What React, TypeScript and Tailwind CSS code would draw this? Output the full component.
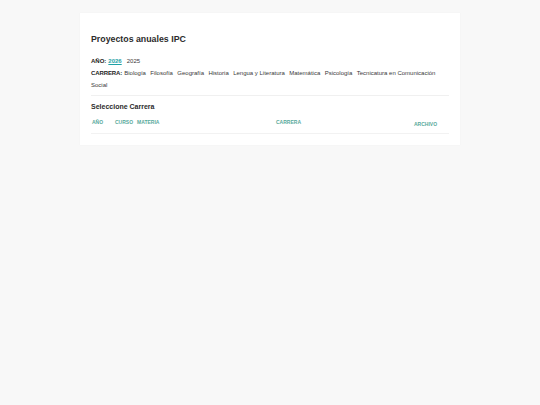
const carreras = [
  "Biología",
  "Filosofía",
  "Geografía",
  "Historia",
  "Lengua y Literatura",
  "Matemática",
  "Psicología",
  "Tecnicatura en Comunicación Social",
];

export default function App() {
  return (
    <div
      className="min-h-[405px] bg-[#f8f8f8] pt-[13px] text-[#333]"
      style={{ fontFamily: '"Liberation Sans", Arial, sans-serif' }}
    >
      <div className="mx-auto w-[380px] bg-white px-[11px] pt-[20px] pb-[11px] shadow-[0_0_1px_rgba(0,0,0,0.06)]">
        <h1 className="text-[8.8px] font-bold leading-[12px] text-[#2b2b2b]">Proyectos anuales IPC</h1>

        <div className="mt-[10px] text-[6px] leading-[12px] text-[#3a3a3a]">
          <span className="font-bold text-[#222]">AÑO:</span>
          <a className="ml-[2px] font-bold text-[#1fa2a6] underline">2026</a>
          <a className="ml-[5px]">2025</a>
        </div>

        <div className="text-[6px] leading-[12px] text-[#3a3a3a]">
          <span className="mr-[2px] font-bold tracking-[-0.1px] text-[#222]">CARRERA:</span>
          {carreras.map((c) => (
            <a key={c} className="mr-[4.4px]">
              {c}
            </a>
          ))}
        </div>

        <div className="mt-[4px] border-b border-[#f0f0f0]" />

        <h2 className="mt-[6px] text-[7px] font-bold leading-[10px] text-[#2b2b2b]">Seleccione Carrera</h2>

        <div className="flex border-b border-[#f2f2f2] pt-[7px] pb-[6px] text-[5px] font-bold leading-[6px] text-[#58a99b]">
          <div className="w-[23px] pl-[1px]">AÑO</div>
          <div className="w-[22px] pl-[1px]">CURSO</div>
          <div className="w-[139px] pl-[1px]">MATERIA</div>
          <div className="w-[138px] pl-[1px]">CARRERA</div>
          <div className="mt-[2px] pl-[1px]">ARCHIVO</div>
        </div>
      </div>
    </div>
  );
}
